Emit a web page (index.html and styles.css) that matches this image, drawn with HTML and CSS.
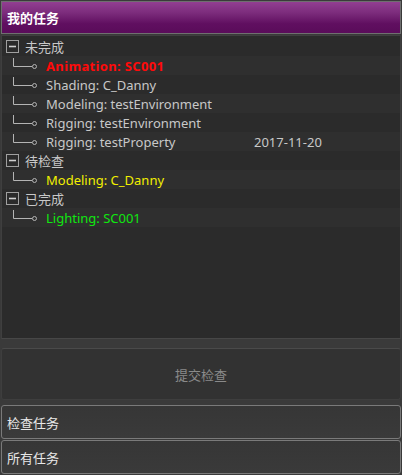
FILE: index.html
```html
<!DOCTYPE html>
<html>
<head>
<meta charset="utf-8">
<link rel="stylesheet" href="styles.css">
</head>
<body>
<div class="app">
  <div class="header">我的任务</div>
  <div class="tree">
    <div class="row group">
      <div class="name"><svg class="box" width="13" height="13" viewBox="0 0 13 13"><rect x="0.5" y="0.5" width="12" height="12" fill="none" stroke="#a0a0a0"/><line x1="3" y1="6.5" x2="10" y2="6.5" stroke="#d0d0d0" stroke-width="1.6"/></svg><span>未完成</span></div>
    </div>
    <div class="row">
      <div class="name"><svg class="branch" width="44" height="19" viewBox="0 0 44 19"><path d="M11.5 2V10.5H30" fill="none" stroke="#b4b4b4"/><circle cx="32.5" cy="10.5" r="2" fill="none" stroke="#b4b4b4"/></svg><span class="red">Animation: SC001</span></div>
    </div>
    <div class="row">
      <div class="name"><svg class="branch" width="44" height="19" viewBox="0 0 44 19"><path d="M11.5 2V10.5H30" fill="none" stroke="#b4b4b4"/><circle cx="32.5" cy="10.5" r="2" fill="none" stroke="#b4b4b4"/></svg><span>Shading: C_Danny</span></div>
    </div>
    <div class="row">
      <div class="name"><svg class="branch" width="44" height="19" viewBox="0 0 44 19"><path d="M11.5 2V10.5H30" fill="none" stroke="#b4b4b4"/><circle cx="32.5" cy="10.5" r="2" fill="none" stroke="#b4b4b4"/></svg><span>Modeling: testEnvironment</span></div>
    </div>
    <div class="row">
      <div class="name"><svg class="branch" width="44" height="19" viewBox="0 0 44 19"><path d="M11.5 2V10.5H30" fill="none" stroke="#b4b4b4"/><circle cx="32.5" cy="10.5" r="2" fill="none" stroke="#b4b4b4"/></svg><span>Rigging: testEnvironment</span></div>
    </div>
    <div class="row">
      <div class="name"><svg class="branch" width="44" height="19" viewBox="0 0 44 19"><path d="M11.5 2V10.5H30" fill="none" stroke="#b4b4b4"/><circle cx="32.5" cy="10.5" r="2" fill="none" stroke="#b4b4b4"/></svg><span>Rigging: testProperty</span></div>
      <div class="date">2017-11-20</div>
    </div>
    <div class="row group">
      <div class="name"><svg class="box" width="13" height="13" viewBox="0 0 13 13"><rect x="0.5" y="0.5" width="12" height="12" fill="none" stroke="#a0a0a0"/><line x1="3" y1="6.5" x2="10" y2="6.5" stroke="#d0d0d0" stroke-width="1.6"/></svg><span>待检查</span></div>
    </div>
    <div class="row">
      <div class="name"><svg class="branch" width="44" height="19" viewBox="0 0 44 19"><path d="M11.5 2V10.5H30" fill="none" stroke="#b4b4b4"/><circle cx="32.5" cy="10.5" r="2" fill="none" stroke="#b4b4b4"/></svg><span class="yellow">Modeling: C_Danny</span></div>
    </div>
    <div class="row group">
      <div class="name"><svg class="box" width="13" height="13" viewBox="0 0 13 13"><rect x="0.5" y="0.5" width="12" height="12" fill="none" stroke="#a0a0a0"/><line x1="3" y1="6.5" x2="10" y2="6.5" stroke="#d0d0d0" stroke-width="1.6"/></svg><span>已完成</span></div>
    </div>
    <div class="row">
      <div class="name"><svg class="branch" width="44" height="19" viewBox="0 0 44 19"><path d="M11.5 2V10.5H30" fill="none" stroke="#b4b4b4"/><circle cx="32.5" cy="10.5" r="2" fill="none" stroke="#b4b4b4"/></svg><span class="green">Lighting: SC001</span></div>
    </div>
  </div>
  <div class="submit">提交检查</div>
  <div class="btn">检查任务</div>
  <div class="btn">所有任务</div>
</div>
</body>
</html>
```
FILE: styles.css
```css
html, body {
  margin: 0;
  padding: 0;
  background: #3a3a3a;
}
.app {
  width: 402px;
  height: 475px;
  overflow: hidden;
  display: flex;
  flex-direction: column;
  font-family: "Noto Sans", "Noto Sans CJK SC", sans-serif;
  font-size: 13px;
  color: #c8c8c8;
}
.header {
  margin: 1px 1px 0 1px;
  height: 31px;
  border: 1px solid #6f6f6f;
  background: linear-gradient(to bottom, #923f92 0%, #7c2c7c 35%, #600f60 70%, #5a0c5a 100%);
  color: #ffffff;
  font-weight: bold;
  display: flex;
  align-items: center;
  padding-left: 5px;
  font-size: 13px;
  flex: none;
}
.tree {
  margin: 1px 1px 0 1px;
  height: 301px;
  border: 1px solid #3f3f3f;
  border-bottom-color: #474747;
  background: #2b2b2b;
  padding-top: 1px;
  box-sizing: content-box;
  flex: none;
}
.row {
  height: 19px;
  display: flex;
  align-items: center;
}
.row:nth-child(even) {
  background: #2f2f2f;
}
.name {
  width: 252px;
  display: flex;
  align-items: center;
  white-space: nowrap;
}
.box {
  margin-left: 4px;
  margin-right: 6px;
  flex: none;
}
.branch {
  flex: none;
}
.date {
  color: #c8c8c8;
}
.red {
  color: #ff0a0a;
  font-weight: bold;
  letter-spacing: 0.35px;
}
.yellow {
  color: #f2f000;
}
.green {
  color: #10e810;
}
.submit {
  margin: 9px 1px 0 1px;
  height: 50px;
  border: 1px solid #3e3e3e;
  border-top-color: #4a4a4a;
  border-radius: 3px;
  background: #323232;
  color: #8a8a8a;
  display: flex;
  align-items: center;
  justify-content: center;
  font-size: 13px;
  flex: none;
}
.btn {
  margin: 5px 1px 0 1px;
  height: 32px;
  border: 1px solid #7a7a7a;
  border-radius: 3px;
  background: linear-gradient(to bottom, #363636, #3a3a3a);
  color: #e8e8e8;
  display: flex;
  align-items: center;
  padding-left: 5px;
  flex: none;
}
.btn + .btn {
  margin-top: 1px;
}
```
